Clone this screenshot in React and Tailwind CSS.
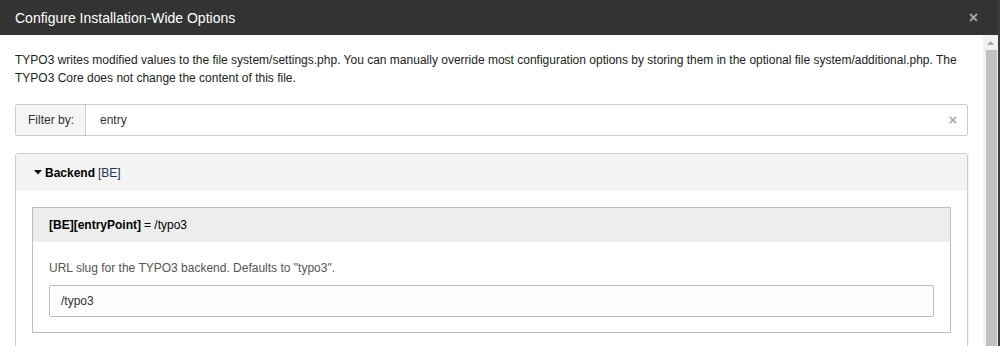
import React from "react";

export default function App() {
  return (
    <div
      className="w-[1000px] h-[346px] overflow-hidden bg-[#3c3c3c] flex"
      style={{ fontFamily: '"Liberation Sans", Arial, sans-serif' }}
    >
      <div className="w-[998px] h-full flex flex-col bg-white">
        <div className="h-[35px] shrink-0 bg-[#333333] flex items-center justify-between pl-[15px] pr-[20px]">
          <span className="text-[14px] text-white leading-none">Configure Installation-Wide Options</span>
          <span className="text-[16px] font-bold text-[#aaaaaa] leading-none">×</span>
        </div>
        <div className="flex flex-1 min-h-0">
          <div className="flex-1 min-w-0 overflow-hidden pt-[16px] px-[15px] text-[12px] leading-[18px] text-[#222]">
            <p className="mb-[17px]">
              TYPO3 writes modified values to the file system/settings.php. You can manually override most configuration options by storing them in the optional file system/additional.php. The TYPO3 Core does not change the content of this file.
            </p>
            <div className="flex h-[32px] border border-[#cccccc] rounded-[2px]">
              <div className="w-[70px] shrink-0 bg-[#f5f5f5] border-r border-[#cccccc] flex items-center pl-[12px] text-[#333]">
                Filter by:
              </div>
              <div className="flex-1 flex items-center justify-between pl-[14px] pr-[10px] text-[#333]">
                <span>entry</span>
                <span className="text-[#aaaaaa] text-[14px] font-bold leading-none">×</span>
              </div>
            </div>
            <div className="mt-[17px] border border-[#cccccc] rounded-t-[3px] shadow-[1px_0_1px_rgba(0,0,0,0.06)]">
              <div className="h-[37px] bg-[#f4f4f4] flex items-center pl-[18px] text-[#000]">
                <svg width="8" height="5" viewBox="0 0 8 5" className="mr-[3px]">
                  <path d="M0 0 L8 0 L4 4.5 Z" fill="#111" />
                </svg>
                <span className="font-bold">Backend</span>
                <span className="ml-[3px] text-[#1e3552]">[BE]</span>
              </div>
              <div className="p-[16px]">
                <div className="border border-[#bfbfbf]">
                  <div className="h-[34px] bg-[#ededed] flex items-center pl-[16px] text-[#000]">
                    <span className="font-bold">[BE][entryPoint]</span>
                    <span className="ml-[3px]">= /typo3</span>
                  </div>
                  <div className="px-[16px] pt-[17px] pb-[15px]">
                    <div className="text-[#555555] mb-[8px]">URL slug for the TYPO3 backend. Defaults to "typo3".</div>
                    <div className="h-[32px] border border-[#bbbbbb] rounded-[2px] bg-[#fdfdfd] flex items-center pl-[11px] text-[#333]">
                      /typo3
                    </div>
                  </div>
                </div>
              </div>
            </div>
          </div>
          <div className="w-[15px] shrink-0 bg-[#f1f1f1] flex flex-col items-center">
            <div className="h-[15px] flex items-center justify-center">
              <svg width="7" height="4" viewBox="0 0 7 4">
                <path d="M0 4 L7 4 L3.5 0 Z" fill="#a3a3a3" />
              </svg>
            </div>
            <div className="flex-1 w-[11px] ml-[2px] bg-[#c1c1c1]" />
          </div>
        </div>
      </div>
    </div>
  );
}
